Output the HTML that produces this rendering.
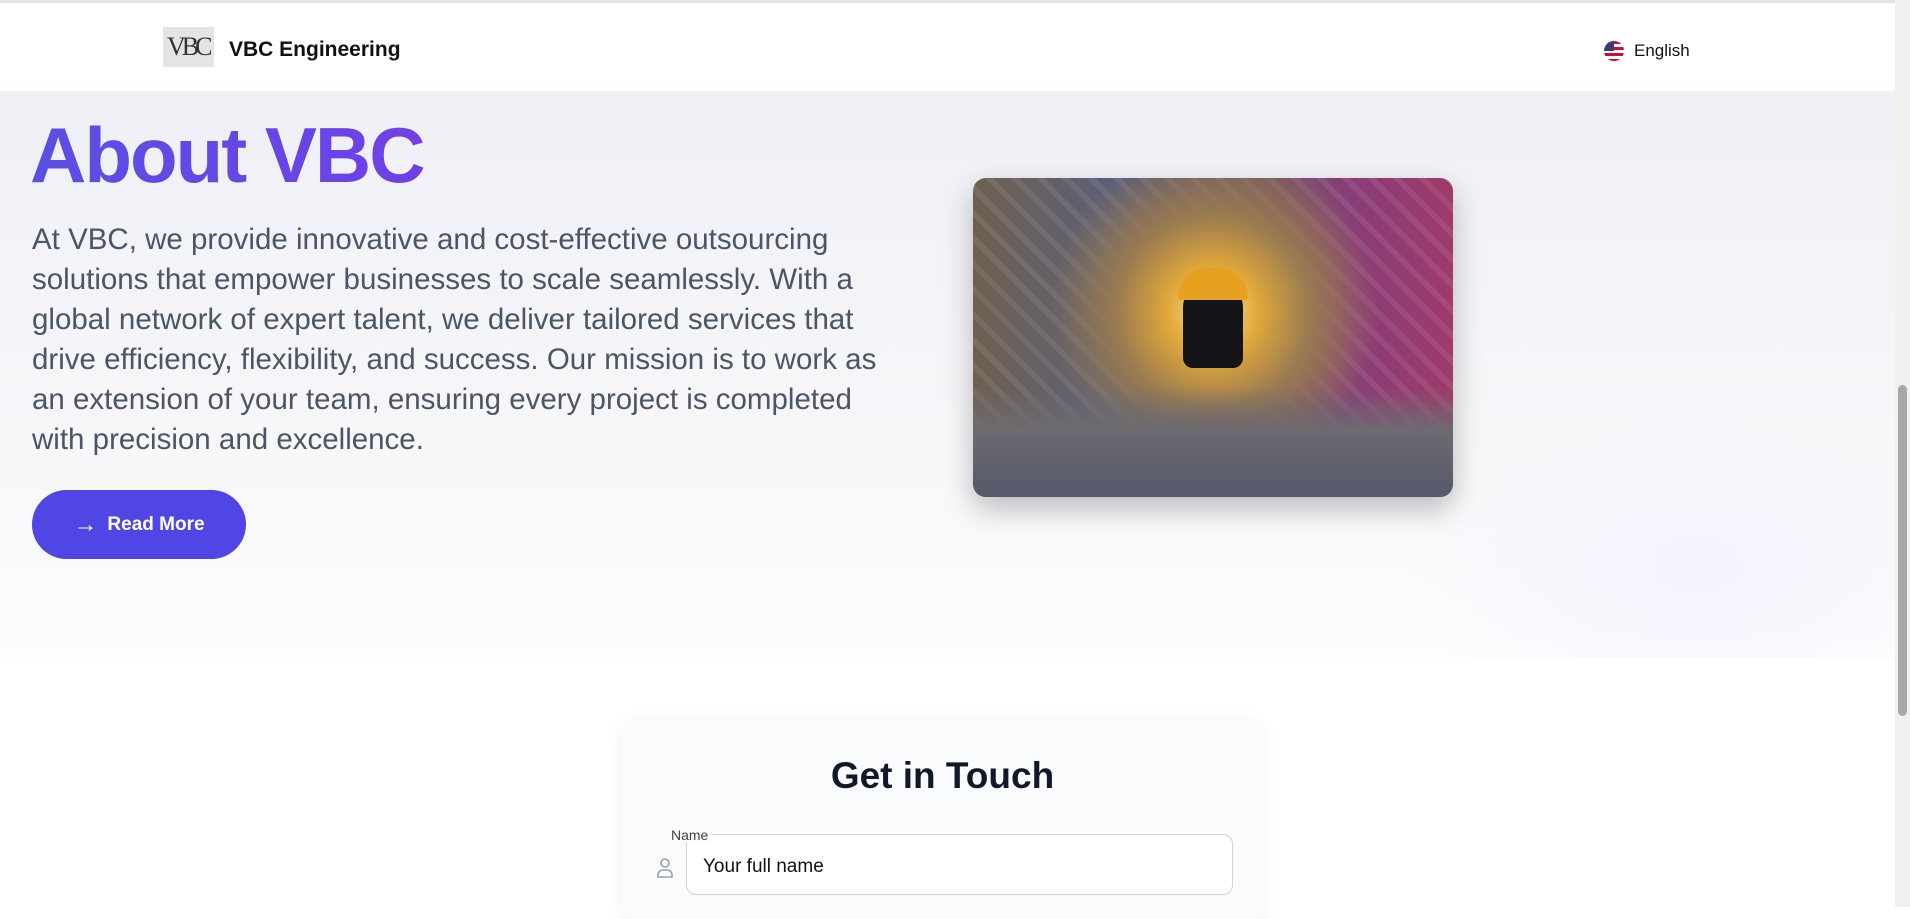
<!DOCTYPE html>
<html><head><meta charset="utf-8"><style>
*{margin:0;padding:0;box-sizing:border-box}
html,body{width:1910px;height:907px;overflow:hidden;background:#fff;font-family:"Liberation Sans",sans-serif}
.topline{position:absolute;left:0;top:0;width:1895px;height:3px;background:#e2e2e4}
header{position:absolute;left:0;top:3px;width:1895px;height:88px;background:#fff;z-index:2}
.logo{position:absolute;left:163px;top:24px;width:51px;height:40px;background:#e4e4e4;font-family:"Liberation Serif",serif;font-size:26px;color:#333;padding-left:4px;line-height:40px;letter-spacing:-4px}
.brand{position:absolute;left:229px;top:35px;font-size:21px;font-weight:bold;color:#111}
.lang{position:absolute;left:1604px;top:38px;font-size:17px;color:#111;display:flex;align-items:center;gap:10px}
.flag{width:20px;height:20px;border-radius:50%;overflow:hidden;background:repeating-linear-gradient(#c8102e 0 3px,#fff 3px 6px);position:relative}
.flag:after{content:"";position:absolute;left:0;top:0;width:10px;height:10px;background:#3c3b6e}
.hero{position:absolute;left:0;top:91px;width:1895px;height:567px;background:linear-gradient(180deg,#eff0f6 0%,#f7f7fa 60%,#fdfdfe 100%);overflow:hidden}
.glow{position:absolute;right:0;top:320px;width:500px;height:260px;background:radial-gradient(ellipse at 60% 60%,#f5f2fd 0%,rgba(255,255,255,0) 70%)}
h1{position:absolute;left:30px;top:110px;font-size:78px;font-weight:900;letter-spacing:-2px;background:linear-gradient(90deg,#5a4fe4,#7040e6);-webkit-background-clip:text;color:transparent;line-height:90px}
p.t{position:absolute;left:32px;top:220px;white-space:nowrap;font-size:29.5px;line-height:40px;color:#4b5563}
.btn{position:absolute;left:32px;top:490px;width:214px;height:69px;border-radius:35px;background:#5046e5;color:#fff;font-weight:bold;font-size:19px;display:flex;align-items:center;justify-content:center;gap:10px}
.img{position:absolute;left:973px;top:178px;width:480px;height:319px;border-radius:13px;box-shadow:0 12px 30px rgba(0,0,0,.25);overflow:hidden;background:radial-gradient(circle at 50% 42%,#f7e2a0 0%,#e0a83a 15%,#9a7a50 32%,transparent 55%),repeating-linear-gradient(45deg,rgba(255,255,255,.08) 0 6px,transparent 6px 18px),linear-gradient(90deg,#6e6050 0%,#5a5f78 30%,#6d5a60 55%,#8a3d78 80%,#a03a6a 100%)}
.img:before{content:"";position:absolute;left:0;right:0;bottom:0;height:110px;background:linear-gradient(180deg,transparent,#6d6a70 40%,#55596a)}
.person{position:absolute;left:210px;top:100px;width:60px;height:90px;background:#141418;border-radius:30px 30px 10px 10px}
.helmet{position:absolute;left:205px;top:90px;width:70px;height:32px;background:#e8a020;border-radius:35px 35px 4px 4px}
.card{position:absolute;left:622px;top:719px;width:641px;height:200px;background:#fafbfc;border-radius:14px;box-shadow:0 4px 20px rgba(0,0,0,.06)}
.card h2{position:absolute;left:0;right:0;top:36px;text-align:center;font-size:37px;font-weight:900;color:#111827}
.lbl{position:absolute;left:46px;top:108px;font-size:14px;color:#444;background:#fafbfc;padding:0 3px;z-index:1}
.inp{position:absolute;left:64px;top:115px;width:547px;height:61px;border:1px solid #cfd2d8;border-radius:10px;background:#fff;font-size:19px;color:#111;padding:21px 16px}
.icon{position:absolute;left:34px;top:138px}
.sb{position:absolute;left:1895px;top:0;width:15px;height:907px;background:#f1f1f1}
.sb div{position:absolute;left:3px;top:385px;width:9px;height:331px;border-radius:5px;background:#a8a8a8}
</style></head><body>
<div class="hero"><div class="glow"></div></div>
<div class="topline"></div>
<header><div class="logo">VBC</div><div class="brand">VBC Engineering</div>
<div class="lang"><div class="flag"></div>English</div></header>
<h1>About VBC</h1>
<p class="t">At VBC, we provide innovative and cost-effective outsourcing<br>solutions that empower businesses to scale seamlessly. With a<br>global network of expert talent, we deliver tailored services that<br>drive efficiency, flexibility, and success. Our mission is to work as<br>an extension of your team, ensuring every project is completed<br>with precision and excellence.</p>
<div class="btn"><span style="font-size:24px;font-weight:normal">→</span>Read More</div>
<div class="img"><div class="person"></div><div class="helmet"></div></div>
<div class="card"><h2>Get in Touch</h2><div class="lbl">Name</div>
<svg class="icon" width="18" height="22" viewBox="0 0 18 22" fill="none" stroke="#9aa0ab" stroke-width="1.6"><circle cx="9" cy="6" r="4"/><path d="M2 20v-2a5 5 0 0 1 5-5h4a5 5 0 0 1 5 5v2z"/></svg>
<div class="inp">Your full name</div></div>
<div class="sb"><div></div></div>
</body></html>
